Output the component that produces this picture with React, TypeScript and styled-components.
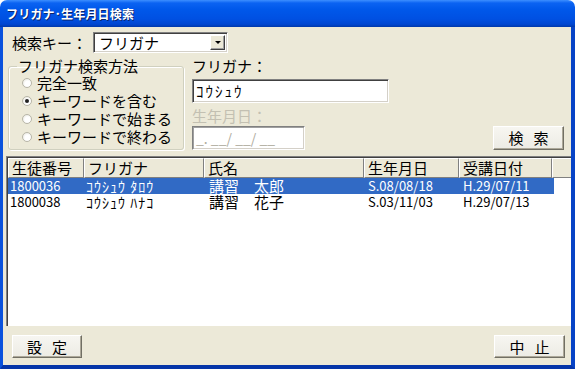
import React, { useState } from "react";
import styled, { createGlobalStyle } from "styled-components";

const GlobalStyle = createGlobalStyle`
  html, body {
    margin: 0;
    padding: 0;
    background: #ffffff;
  }
  body {
    font-family: "Noto Sans CJK JP", "Noto Sans", sans-serif;
  }
`;

const Window = styled.div`
  width: 575px;
  height: 369px;
  display: flex;
  flex-direction: column;
  overflow: hidden;
`;

const TitleBar = styled.div`
  height: 27px;
  flex: none;
  display: flex;
  align-items: center;
  padding-left: 6px;
  background: linear-gradient(
    #3d8fff 0,
    #0b63f2 3px,
    #0058ea 35%,
    #0050e2 70%,
    #0046d0 90%,
    #0038aa 100%
  );
  border-radius: 7px 7px 0 0;
`;

const Title = styled.span`
  color: #ffffff;
  font-size: 12px;
  font-weight: bold;
  line-height: 14px;
  letter-spacing: 0.2px;
  text-shadow: 1px 1px 0 #0a246a;
`;

const Frame = styled.div`
  flex: 1;
  min-height: 0;
  display: flex;
  border-left: 3px solid #0a52dd;
  border-right: 4px solid #0743c6;
  border-bottom: 4px solid #0535a8;
`;

const Body = styled.div`
  flex: 1;
  min-width: 0;
  overflow: hidden;
  display: flex;
  flex-direction: column;
  background: #ece9d8;
`;

const Label = styled.span<{ $disabled?: boolean }>`
  font-size: 15px;
  line-height: 16px;
  color: ${(p) => (p.$disabled ? "#c3c0b2" : "#000000")};
  white-space: nowrap;
`;

const KeyRow = styled.div`
  display: flex;
  align-items: center;
  gap: 6px;
  margin-top: 5px;
  padding-left: 9px;
  height: 21px;
`;

const Combo = styled.div`
  width: 135px;
  height: 21px;
  box-sizing: border-box;
  display: flex;
  align-items: center;
  background: #ffffff;
  border-style: solid;
  border-width: 1px;
  border-color: #808080 #ffffff #ffffff #808080;
  box-shadow: inset 1px 1px 0 #404040, inset -1px -1px 0 #d4d0c8;
`;

const ComboText = styled.span`
  flex: 1;
  padding-left: 5px;
  font-size: 15px;
  line-height: 16px;
`;

const DropButton = styled.div`
  width: 15px;
  height: 15px;
  margin-right: 2px;
  box-sizing: border-box;
  display: flex;
  align-items: center;
  justify-content: center;
  background: #ece9d8;
  border-style: solid;
  border-width: 1px;
  border-color: #ffffff #404040 #404040 #ffffff;
  box-shadow: inset -1px -1px 0 #a0a0a0;

  &::after {
    content: "";
    border-left: 3px solid transparent;
    border-right: 3px solid transparent;
    border-top: 3px solid #000000;
  }
`;

const MiddleRow = styled.div`
  display: flex;
  margin-top: 5px;
  height: 92px;
`;

const GroupBox = styled.fieldset`
  margin: 0 0 0 5px;
  width: 176px;
  box-sizing: border-box;
  padding: 1px 0 0 13px;
  border: 1px solid #d0d0bf;
  border-radius: 3px;
  box-shadow: 1px 1px 0 #ffffff inset, 1px 1px 0 #ffffff;
  display: flex;
  flex-direction: column;
  gap: 2px;
`;

const Legend = styled.legend`
  font-size: 15px;
  line-height: 16px;
  padding: 0 1px;
  margin-left: -5px;
`;

const RadioRow = styled.label`
  display: flex;
  align-items: center;
  gap: 5px;
  height: 16px;
  cursor: pointer;
`;

const RadioDot = styled.span<{ $checked: boolean }>`
  width: 10px;
  height: 10px;
  flex: none;
  box-sizing: border-box;
  border-radius: 50%;
  border: 1px solid #b8b6a8;
  background: radial-gradient(circle at 60% 60%, #ffffff 40%, #e2e0d6 100%);
  display: flex;
  align-items: center;
  justify-content: center;

  &::after {
    content: "";
    width: 4px;
    height: 4px;
    border-radius: 50%;
    background: ${(p) => (p.$checked ? "#222222" : "transparent")};
  }
`;

const FieldColumn = styled.div`
  display: flex;
  flex-direction: column;
  margin-left: 8px;
`;

const TextBox = styled.div<{ $width: number; $disabled?: boolean }>`
  width: ${(p) => p.$width}px;
  height: 24px;
  box-sizing: border-box;
  display: flex;
  align-items: center;
  padding-left: 3px;
  background: #ffffff;
  border-style: solid;
  border-width: 1px;
  border-color: #808080 #ffffff #ffffff #808080;
  box-shadow: inset 1px 1px 0 ${(p) => (p.$disabled ? "#a0a0a0" : "#404040")},
    inset -1px -1px 0 #d4d0c8;
  font-size: ${(p) => (p.$disabled ? 14 : 15)}px;
  letter-spacing: ${(p) => (p.$disabled ? 0 : 2)}px;
  line-height: 16px;
  color: ${(p) => (p.$disabled ? "#b0ada0" : "#000000")};
  white-space: pre;
`;

const FieldGap = styled.div<{ $h: number }>`
  height: ${(p) => p.$h}px;
`;

const SearchArea = styled.div`
  flex: 1;
  display: flex;
  justify-content: flex-end;
  align-items: flex-end;
  padding-right: 7px;
`;

const Button = styled.button<{ $width: number; $height: number }>`
  width: ${(p) => p.$width}px;
  height: ${(p) => p.$height}px;
  padding: 0;
  box-sizing: border-box;
  background: linear-gradient(#f7f6f1, #ecebe4);
  border-style: solid;
  border-width: 1px;
  border-color: #ffffff #716f64 #716f64 #ffffff;
  box-shadow: inset -1px -1px 0 #aca899;
  font-family: "Noto Sans CJK JP", sans-serif;
  font-size: 15px;
  line-height: 16px;
  color: #000000;
  letter-spacing: 10px;
  text-indent: 10px;
  cursor: pointer;
`;

const ListView = styled.div`
  margin: 6px 0 0 3px;
  height: 170px;
  box-sizing: border-box;
  background: #ffffff;
  border-style: solid;
  border-width: 1px 0 0 1px;
  border-color: #808080;
  box-shadow: inset 1px 1px 0 #404040;
  padding: 1px 0 0 1px;
  overflow: hidden;
`;

const Row = styled.div`
  display: flex;
`;

const HeaderCell = styled.div<{ $w: number }>`
  width: ${(p) => p.$w}px;
  flex: none;
  height: 20px;
  box-sizing: border-box;
  padding-left: 3px;
  display: flex;
  align-items: center;
  background: #ece9d8;
  border-style: solid;
  border-width: 1px;
  border-color: #ffffff #808080 #808080 #ffffff;
  font-size: 15px;
  line-height: 16px;
  white-space: nowrap;
`;

const DataRow = styled.div<{ $selected: boolean }>`
  display: flex;
  width: 546px;
  height: 16px;
  background: ${(p) => (p.$selected ? "#316ac5" : "transparent")};
  color: ${(p) => (p.$selected ? "#ffffff" : "#000000")};
`;

const Cell = styled.div<{
  $w: number;
  $size: number;
  $pad?: number;
  $spacing?: number;
}>`
  width: ${(p) => p.$w}px;
  flex: none;
  padding-left: ${(p) => p.$pad ?? 2}px;
  box-sizing: border-box;
  font-size: ${(p) => p.$size}px;
  letter-spacing: ${(p) => p.$spacing ?? 0}px;
  line-height: 16px;
  white-space: pre;
`;

const Footer = styled.div`
  flex: 1;
  display: flex;
  justify-content: space-between;
  align-items: flex-start;
  padding: 9px 6px 0 9px;
`;

const columns = [
  { title: "生徒番号", w: 76 },
  { title: "フリガナ", w: 120 },
  { title: "氏名", w: 160 },
  { title: "生年月日", w: 95 },
  { title: "受講日付", w: 93 },
  { title: "", w: 24 },
];

const students = [
  {
    id: "1800036",
    kana: "ｺｳｼｭｳ ﾀﾛｳ",
    name: "講習　太郎",
    birth: "S.08/08/18",
    date: "H.29/07/11",
  },
  {
    id: "1800038",
    kana: "ｺｳｼｭｳ ﾊﾅｺ",
    name: "講習　花子",
    birth: "S.03/11/03",
    date: "H.29/07/13",
  },
];

const methods = [
  "完全一致",
  "キーワードを含む",
  "キーワードで始まる",
  "キーワードで終わる",
];

const App: React.FC = () => {
  const [method, setMethod] = useState(1);
  const [selected, setSelected] = useState(0);

  return (
    <>
      <GlobalStyle />
      <Window>
        <TitleBar>
          <Title>フリガナ･生年月日検索</Title>
        </TitleBar>
        <Frame>
          <Body>
            <KeyRow>
              <Label>検索キー：</Label>
              <Combo>
                <ComboText>フリガナ</ComboText>
                <DropButton />
              </Combo>
            </KeyRow>

            <MiddleRow>
              <GroupBox>
                <Legend>フリガナ検索方法</Legend>
                {methods.map((m, i) => (
                  <RadioRow key={m} onClick={() => setMethod(i)}>
                    <RadioDot $checked={method === i} />
                    <Label>{m}</Label>
                  </RadioRow>
                ))}
              </GroupBox>

              <FieldColumn>
                <Label>フリガナ：</Label>
                <FieldGap $h={5} />
                <TextBox $width={197}>ｺｳｼｭｳ</TextBox>
                <FieldGap $h={6} />
                <Label $disabled>生年月日：</Label>
                <FieldGap $h={2} />
                <TextBox $width={113} $disabled>
                  {"_. __/ __/ __"}
                </TextBox>
              </FieldColumn>

              <SearchArea>
                <Button $width={71} $height={24}>
                  検索
                </Button>
              </SearchArea>
            </MiddleRow>

            <ListView>
              <Row>
                {columns.map((c) => (
                  <HeaderCell key={c.title + c.w} $w={c.w}>
                    {c.title}
                  </HeaderCell>
                ))}
              </Row>
              {students.map((s, i) => (
                <DataRow
                  key={s.id}
                  $selected={selected === i}
                  onClick={() => setSelected(i)}
                >
                  <Cell $w={76} $size={13}>
                    {s.id}
                  </Cell>
                  <Cell $w={120} $size={14} $spacing={1}>
                    {s.kana}
                  </Cell>
                  <Cell $w={160} $size={15} $pad={5}>
                    {s.name}
                  </Cell>
                  <Cell $w={95} $size={13} $pad={4}>
                    {s.birth}
                  </Cell>
                  <Cell $w={93} $size={13} $pad={4}>
                    {s.date}
                  </Cell>
                </DataRow>
              ))}
            </ListView>

            <Footer>
              <Button $width={70} $height={23}>
                設定
              </Button>
              <Button $width={71} $height={23}>
                中止
              </Button>
            </Footer>
          </Body>
        </Frame>
      </Window>
    </>
  );
};

export default App;
